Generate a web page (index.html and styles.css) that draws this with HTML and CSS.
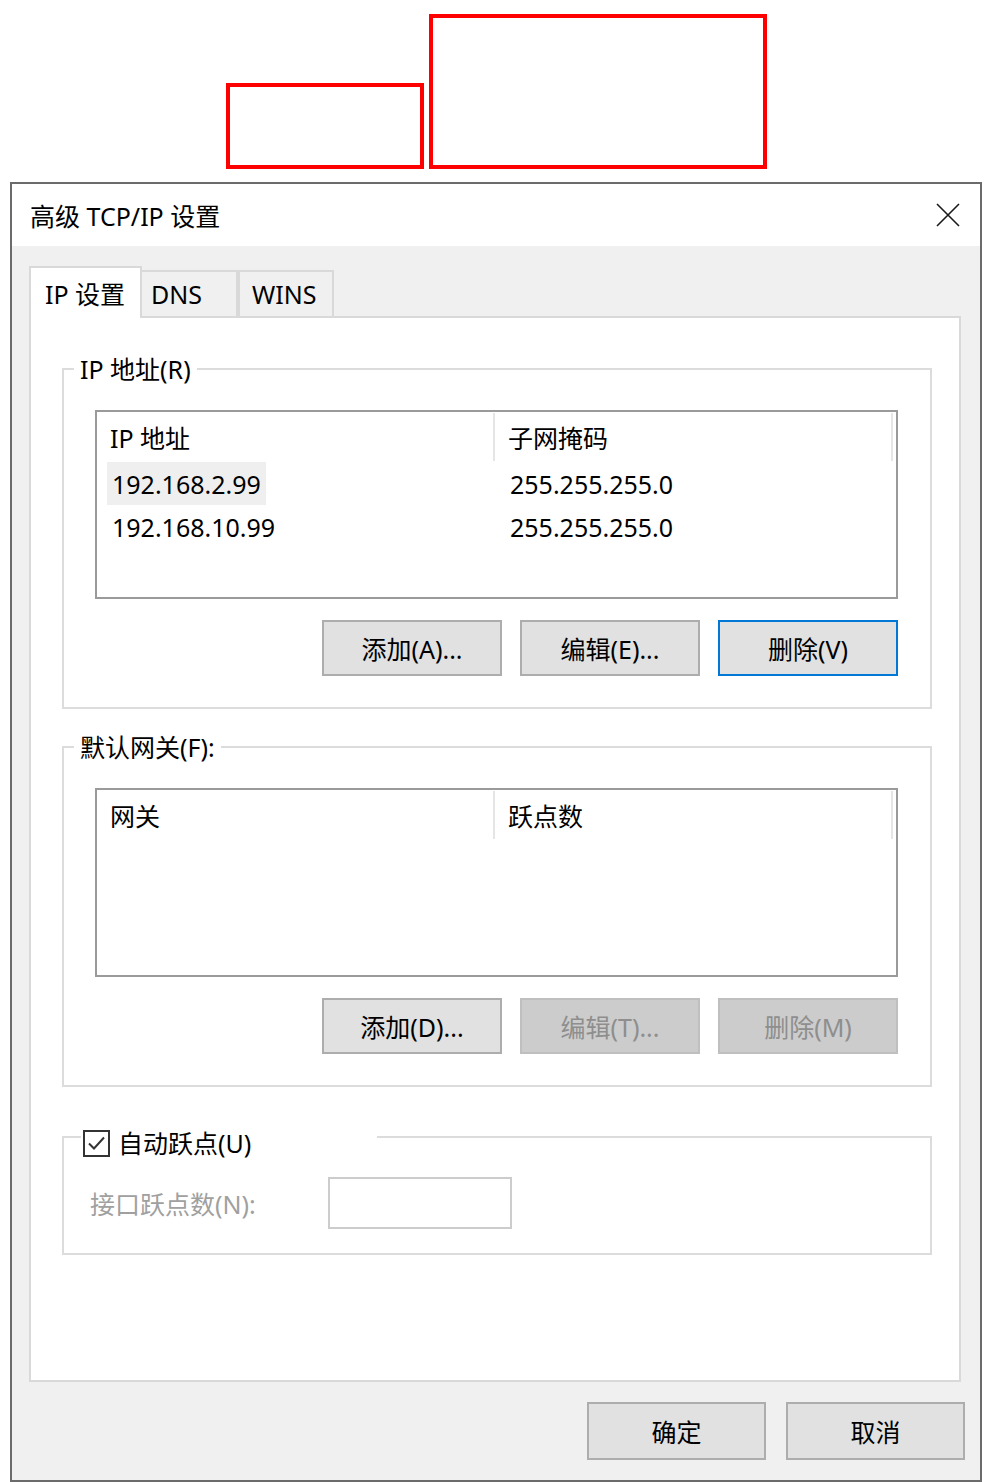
FILE: index.html
```html
<!DOCTYPE html>
<html lang="zh-CN">
<head>
    <meta charset="UTF-8">
    <meta name="viewport" content="width=device-width, initial-scale=1.0">
    <title>高级 TCP/IP 设置</title>
    <link rel="stylesheet" href="styles.css">
</head>
<body>
    <div class="marks">
        <div class="mark mark-small"></div>
        <div class="mark mark-large"></div>
    </div>

    <div class="dialog">
        <div class="titlebar">
            <span class="title">高级 TCP/IP 设置</span>
            <svg class="close" width="24" height="24" viewBox="0 0 24 24">
                <path d="M1 1 L23 23 M23 1 L1 23" stroke="#1a1a1a" stroke-width="1.6" fill="none"/>
            </svg>
        </div>

        <div class="dialog-body">
            <div class="tabs">
                <div class="tab active">IP 设置</div>
                <div class="tab tab-dns">DNS</div>
                <div class="tab tab-wins">WINS</div>
            </div>

            <div class="panel">
                <fieldset class="group">
                    <legend>IP 地址(R)</legend>
                    <div class="group-body">
                        <div class="list">
                            <div class="list-head">
                                <div class="col">IP 地址</div>
                                <div class="col">子网掩码</div>
                            </div>
                            <div class="list-row">
                                <div class="cell"><span class="sel">192.168.2.99</span></div>
                                <div class="cell"><span>255.255.255.0</span></div>
                            </div>
                            <div class="list-row">
                                <div class="cell"><span>192.168.10.99</span></div>
                                <div class="cell"><span>255.255.255.0</span></div>
                            </div>
                        </div>
                        <div class="btn-row">
                            <button class="btn">添加(A)...</button>
                            <button class="btn">编辑(E)...</button>
                            <button class="btn focused">删除(V)</button>
                        </div>
                    </div>
                </fieldset>

                <fieldset class="group">
                    <legend>默认网关(F):</legend>
                    <div class="group-body">
                        <div class="list">
                            <div class="list-head">
                                <div class="col">网关</div>
                                <div class="col">跃点数</div>
                            </div>
                        </div>
                        <div class="btn-row">
                            <button class="btn">添加(D)...</button>
                            <button class="btn" disabled>编辑(T)...</button>
                            <button class="btn" disabled>删除(M)</button>
                        </div>
                    </div>
                </fieldset>

                <fieldset class="group group-metric">
                    <legend>
                        <svg class="check" width="27" height="27" viewBox="0 0 27 27">
                            <rect x="1" y="1" width="25" height="25" fill="#fff" stroke="#333" stroke-width="2"/>
                            <path d="M6 13.5 L11 18.5 L21 7.5" stroke="#333" stroke-width="2" fill="none"/>
                        </svg>
                        <span>自动跃点(U)</span>
                    </legend>
                    <div class="metric-body">
                        <span class="metric-label">接口跃点数(N):</span>
                        <div class="metric-input"></div>
                    </div>
                </fieldset>
            </div>

            <div class="footer">
                <button class="btn btn-wide">确定</button>
                <button class="btn btn-wide">取消</button>
            </div>
        </div>
    </div>
</body>
</html>
```

FILE: styles.css
```css
body {
    margin: 0;
    background: #fff;
    font-family: "Noto Sans", "Noto Sans CJK SC", sans-serif;
    font-size: 25px;
    color: #000;
}

/* red outline boxes above the dialog */
.marks {
    display: flex;
    align-items: flex-end;
    gap: 5px;
    height: 182px;
    box-sizing: border-box;
    padding: 0 0 13px 226px;
}
.mark {
    box-sizing: border-box;
    border: 4px solid #f00;
}
.mark-small { width: 198px; height: 86px; }
.mark-large { width: 338px; height: 155px; }

.dialog {
    margin-left: 10px;
    width: 972px;
    height: 1300px;
    box-sizing: border-box;
    border: 2px solid #6b6b6b;
    background: #f0f0f0;
    display: flex;
    flex-direction: column;
}
.titlebar {
    height: 62px;
    flex: none;
    background: #fff;
    display: flex;
    align-items: center;
    justify-content: space-between;
    padding: 0 20px 0 18px;
}
.close { display: block; }

.dialog-body {
    flex: 1;
    display: flex;
    flex-direction: column;
    padding: 20px 19px 20px 17px;
    min-height: 0;
}

.tabs {
    display: flex;
    align-items: flex-end;
    height: 52px;
    margin-bottom: -2px;
    position: relative;
    z-index: 1;
    flex: none;
}
.tab {
    box-sizing: border-box;
    height: 46px;
    margin-bottom: 2px;
    width: 96px;
    border: 2px solid #d9d9d9;
    border-bottom: none;
    background: #f0f0f0;
    display: flex;
    align-items: center;
}
.tab.active {
    width: 113px;
    height: 52px;
    margin-bottom: 0;
    background: #fff;
    padding-left: 14px;
}
.tab-dns { border-left: none; padding-left: 9px; }
.tab-wins { padding-left: 12px; }

.panel {
    flex: 1;
    background: #fff;
    border: 2px solid #d9d9d9;
    padding: 37px 27px 0 31px;
}

.group {
    margin: 0;
    padding: 0;
    min-width: 0;
    border: 2px solid #dcdcdc;
}
.group + .group { margin-top: 24px; }
.group legend {
    margin-left: 10px;
    padding: 0 6px;
    line-height: 28px;
}
.group-body {
    padding: 27px 32px 31px 31px;
}

.list {
    height: 189px;
    box-sizing: border-box;
    border: 2px solid #9a9a9a;
    background: #fff;
}
.list-head,
.list-row {
    display: grid;
    grid-template-columns: 398px 398px;
}
.list-head { height: 50px; }
.list-head .col {
    display: flex;
    align-items: center;
    padding-left: 13px;
    margin: 1px 0;
    border-right: 2px solid #e5e5e5;
}
.list-row { height: 43px; }
.cell {
    display: flex;
    padding-left: 10px;
}
.cell span {
    display: flex;
    align-items: center;
    padding: 0 5px;
}
.cell .sel { background: #efefef; }

.btn-row {
    display: flex;
    justify-content: flex-end;
    gap: 18px;
    margin-top: 21px;
}
.btn {
    width: 180px;
    height: 56px;
    box-sizing: border-box;
    border: 2px solid #adadad;
    background: #e1e1e1;
    font-family: inherit;
    font-size: 25px;
    color: #000;
    padding: 0;
}
.btn.focused { border-color: #0078d7; }
.btn:disabled {
    background: #cccccc;
    border-color: #bfbfbf;
    color: #8e8e8e;
}

.group-metric { margin-top: 30px !important; }
.group-metric legend {
    margin-left: 17px;
    padding: 12px 0 0 2px;
    width: 296px;
    box-sizing: border-box;
    display: flex;
    align-items: center;
    gap: 8px;
}
.check { display: block; }
.metric-body {
    display: flex;
    align-items: center;
    padding: 20px 24px 24px 26px;
}
.metric-label {
    width: 238px;
    color: #a0a0a0;
}
.metric-input {
    width: 184px;
    height: 52px;
    box-sizing: border-box;
    border: 2px solid #cccccc;
    background: #fff;
}

.footer {
    display: flex;
    justify-content: flex-end;
    gap: 20px;
    margin: 20px -4px 0 0;
    flex: none;
}
.btn-wide { width: 179px; height: 58px; }
```
